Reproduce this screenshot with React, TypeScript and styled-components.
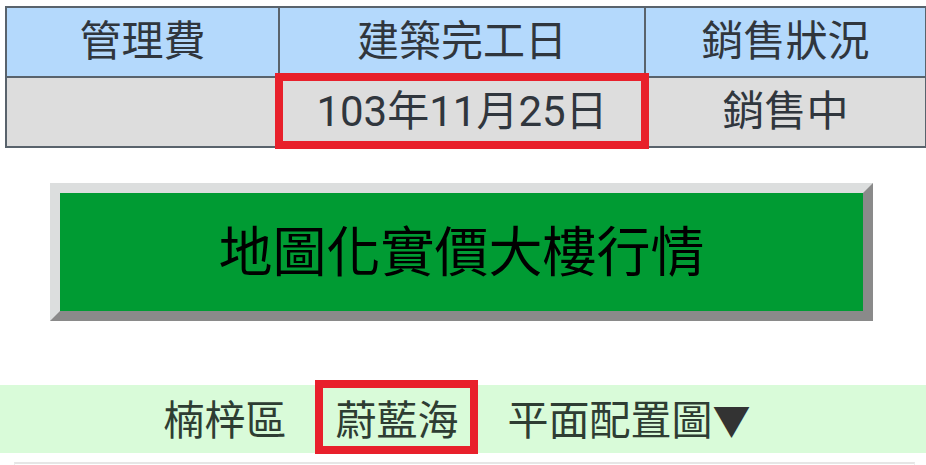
import styled, { createGlobalStyle } from 'styled-components';

const GlobalStyle = createGlobalStyle`
    body {
        margin: 0;
        background: #fff;
        font-family: Roboto, "Noto Sans CJK TC", sans-serif;
        color: #333;
    }
`;

const Page = styled.div`
    width: 926px;
    height: 465px;
    overflow: hidden;
    padding-top: 6px;
    box-sizing: border-box;
`;

const InfoTable = styled.table`
    margin-left: 5px;
    width: 914px;
    border-collapse: collapse;
    table-layout: fixed;
    border: 2px solid #59636c;
`;

const HeadCell = styled.th<{ $w: number }>`
    width: ${p => p.$w}px;
    height: 68px;
    padding: 0;
    background: #b4d9fc;
    border: 2px solid #59636c;
    font-size: 42px;
    font-weight: normal;
    color: #30363d;
    text-align: center;
    line-height: 1;
`;

const Cell = styled.td`
    height: 68px;
    padding: 0;
    background: #dddddd;
    border: 2px solid #59636c;
    font-size: 42px;
    color: #30363d;
    text-align: center;
    line-height: 1;
`;

// red annotation frame laid over a cell
const Marked = styled.div`
    position: relative;
    height: 68px;
    display: flex;
    align-items: center;
    justify-content: center;

    &::after {
        content: '';
        position: absolute;
        top: -5px;
        bottom: -3px;
        left: -5px;
        right: -5px;
        border: 8px solid #e8202b;
    }
`;

const MapButton = styled.div`
    margin: 35px 0 0 50px;
    width: 823px;
    height: 138px;
    box-sizing: border-box;
    border: 10px solid;
    border-color: #dcdede #8a8a8a #8a8a8a #dcdede;
    background: #009b33;
    display: flex;
    align-items: center;
    justify-content: center;
    font-family: "Noto Sans CJK TC", sans-serif;
    font-size: 54px;
    color: #000;
    padding-bottom: 8px;
`;

const CrumbBar = styled.div`
    margin-top: 64px;
    height: 68px;
    box-sizing: border-box;
    background: #d9fbd9;
    display: flex;
    align-items: center;
    justify-content: center;
    gap: 29px;
    padding: 0 12px 4px 0;
    font-family: "Noto Sans CJK TC", sans-serif;
    font-size: 41px;
    color: #2e3d33;
`;

const Crumb = styled.span<{ $marked?: boolean }>`
    position: relative;
    line-height: 1;
    padding: 0 ${p => (p.$marked ? '20px' : '0')};

    ${p => p.$marked && `
        &::after {
            content: '';
            position: absolute;
            top: -17px;
            bottom: -16px;
            left: 0;
            right: 0;
            border: 8px solid #e8202b;
        }
    `}
`;

const Arrow = styled.span`
    font-size: 38px;
    color: #333;
`;

const NextPanel = styled.div`
    margin: 9px 11px 0 14px;
    height: 40px;
    border-top: 2px solid #e6e6e6;
    border-left: 1px solid #eee;
    border-right: 1px solid #eee;
`;

export default function App() {
    return (
        <>
            <GlobalStyle />
            <Page>
                <InfoTable>
                    <thead>
                        <tr>
                            <HeadCell $w={271}>管理費</HeadCell>
                            <HeadCell $w={364}>建築完工日</HeadCell>
                            <HeadCell $w={279}>銷售狀況</HeadCell>
                        </tr>
                    </thead>
                    <tbody>
                        <tr>
                            <Cell></Cell>
                            <Cell>
                                <Marked>103年11月25日</Marked>
                            </Cell>
                            <Cell>銷售中</Cell>
                        </tr>
                    </tbody>
                </InfoTable>
                <MapButton>地圖化實價大樓行情</MapButton>
                <CrumbBar>
                    <Crumb>楠梓區</Crumb>
                    <Crumb $marked>蔚藍海</Crumb>
                    <Crumb>平面配置圖<Arrow>▼</Arrow></Crumb>
                </CrumbBar>
                <NextPanel />
            </Page>
        </>
    );
}
